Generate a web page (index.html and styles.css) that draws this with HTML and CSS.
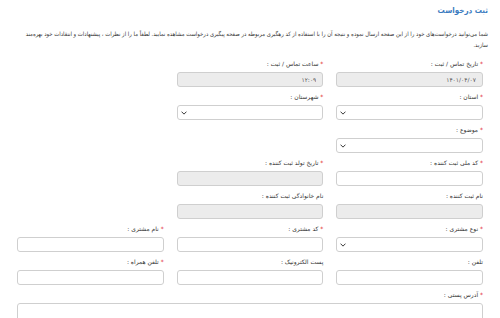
FILE: index.html
```html
<!DOCTYPE html>
<html lang="fa" dir="rtl">
<head>
<meta charset="utf-8">
<title>ثبت درخواست</title>
<link rel="stylesheet" href="styles.css">
</head>
<body>
<div class="page">
  <h1 class="title">ثبت درخواست</h1>
  <p class="intro">شما می‌توانید درخواست‌های خود را از این صفحه ارسال نموده و نتیجه آن را با استفاده از کد رهگیری مربوطه در صفحه پیگیری درخواست مشاهده نمایید. لطفاً ما را از نظرات ، پیشنهادات و انتقادات خود بهره‌مند سازید.</p>
  <form class="form">
    <div class="row">
      <div class="field">
        <label class="label"><span class="req">*</span> تاریخ تماس / ثبت :</label>
        <input class="control" type="text" value="۱۴۰۱/۰۴/۰۷" disabled>
      </div>
      <div class="field">
        <label class="label"><span class="req">*</span> ساعت تماس / ثبت :</label>
        <input class="control" type="text" value="۱۲:۰۹" disabled>
      </div>
    </div>
    <div class="row">
      <div class="field">
        <label class="label"><span class="req">*</span> استان :</label>
        <div class="select"><select class="control"></select><svg class="chev" viewBox="0 0 8 5" width="6" height="4"><path d="M0.7 0.7 L4 4 L7.3 0.7" fill="none" stroke="#333" stroke-width="1.3"/></svg></div>
      </div>
      <div class="field">
        <label class="label"><span class="req">*</span> شهرستان :</label>
        <div class="select"><select class="control"></select><svg class="chev" viewBox="0 0 8 5" width="6" height="4"><path d="M0.7 0.7 L4 4 L7.3 0.7" fill="none" stroke="#333" stroke-width="1.3"/></svg></div>
      </div>
    </div>
    <div class="row">
      <div class="field">
        <label class="label"><span class="req">*</span> موضوع :</label>
        <div class="select"><select class="control"></select><svg class="chev" viewBox="0 0 8 5" width="6" height="4"><path d="M0.7 0.7 L4 4 L7.3 0.7" fill="none" stroke="#333" stroke-width="1.3"/></svg></div>
      </div>
    </div>
    <div class="row">
      <div class="field">
        <label class="label"><span class="req">*</span> کد ملی ثبت کننده :</label>
        <input class="control" type="text">
      </div>
      <div class="field">
        <label class="label"><span class="req">*</span> تاریخ تولد ثبت کننده :</label>
        <input class="control" type="text" disabled>
      </div>
    </div>
    <div class="row">
      <div class="field">
        <label class="label">نام ثبت کننده :</label>
        <input class="control" type="text" disabled>
      </div>
      <div class="field">
        <label class="label">نام خانوادگی ثبت کننده :</label>
        <input class="control" type="text" disabled>
      </div>
    </div>
    <div class="row">
      <div class="field">
        <label class="label"><span class="req">*</span> نوع مشتری :</label>
        <div class="select"><select class="control"></select><svg class="chev" viewBox="0 0 8 5" width="6" height="4"><path d="M0.7 0.7 L4 4 L7.3 0.7" fill="none" stroke="#333" stroke-width="1.3"/></svg></div>
      </div>
      <div class="field">
        <label class="label"><span class="req">*</span> کد مشتری :</label>
        <input class="control" type="text">
      </div>
      <div class="field">
        <label class="label"><span class="req">*</span> نام مشتری :</label>
        <input class="control" type="text">
      </div>
    </div>
    <div class="row">
      <div class="field">
        <label class="label">تلفن :</label>
        <input class="control" type="text">
      </div>
      <div class="field">
        <label class="label">پست الکترونیک :</label>
        <input class="control" type="text">
      </div>
      <div class="field">
        <label class="label"><span class="req">*</span> تلفن همراه :</label>
        <input class="control" type="text">
      </div>
    </div>
    <div class="row">
      <div class="field wide">
        <label class="label"><span class="req">*</span> آدرس پستی :</label>
        <textarea class="control area"></textarea>
      </div>
    </div>
  </form>
</div>
</body>
</html>
```

FILE: styles.css
```css
* { box-sizing: border-box; }
html, body { margin: 0; padding: 0; background: #fff; }
body {
  font-family: "DejaVu Sans", sans-serif;
  color: #333;
  overflow: hidden;
}
.page {
  padding: 4px 12px 0 12px;
}
.title {
  margin: 0;
  font-family: "DejaVu Sans Condensed", "DejaVu Sans", sans-serif;
  font-size: 8px;
  line-height: 13px;
  font-weight: bold;
  color: #3a7bbf;
}
.intro {
  margin: 12px 0 0 0;
  font-family: "DejaVu Sans Condensed", "DejaVu Sans", sans-serif;
  font-size: 5.9px;
  line-height: 11px;
  color: #333;
}
.form {
  margin-top: 8px;
  padding: 0 5px;
}
.row {
  display: grid;
  grid-template-columns: repeat(3, 1fr);
  column-gap: 13px;
  margin-bottom: 5px;
}
.field.wide { grid-column: 1 / 4; }
.label {
  display: block;
  font-size: 6px;
  line-height: 10px;
  height: 10px;
  margin-bottom: 3px;
  color: #333;
  white-space: nowrap;
}
.req { color: #e02020; }
.control {
  display: block;
  width: 100%;
  height: 15px;
  margin: 0;
  padding: 0 6px;
  border: 1px solid #cfcfcf;
  border-radius: 3px;
  background: #fff;
  font-family: "DejaVu Sans", sans-serif;
  font-size: 6px;
  color: #555;
  outline: none;
}
.control:disabled {
  background: #ececec;
  color: #555;
  -webkit-text-fill-color: #555;
  opacity: 1;
}
.select { position: relative; }
select.control { -webkit-appearance: none; appearance: none; }
.chev {
  position: absolute;
  left: 4px;
  top: 6px;
}
.area {
  height: 40px;
  resize: none;
}
```
